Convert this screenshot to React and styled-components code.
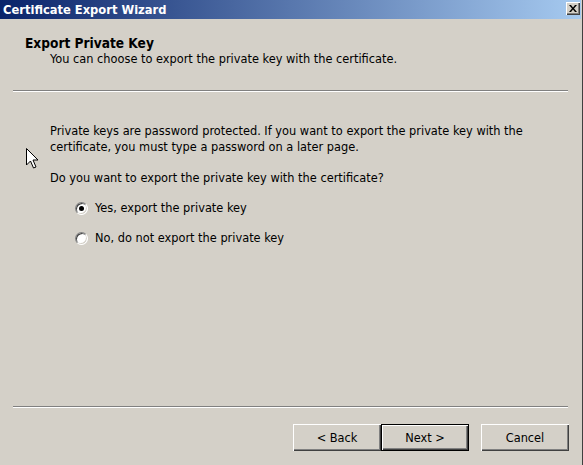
import React from "react";
import styled, { createGlobalStyle } from "styled-components";

const Global = createGlobalStyle`
  html, body { margin: 0; padding: 0; background: #d4d0c8; }
  body { font-family: "DejaVu Sans Condensed", "Liberation Sans", sans-serif; }
  * { box-sizing: border-box; }
`;

const FONT = `"DejaVu Sans Condensed", "Liberation Sans", sans-serif`;

const Window = styled.div`
  position: relative;
  width: 583px;
  height: 465px;
  display: flex;
  flex-direction: column;
  background: #d4d0c8;
  border-right: 1px solid #404040;
  padding-right: 1px;
  font-family: ${FONT};
  font-size: 12.65px;
  color: #000;
  overflow: hidden;
`;

const TitleBar = styled.div`
  height: 19px;
  flex: 0 0 19px;
  display: flex;
  align-items: center;
  justify-content: space-between;
  padding: 0 1px 0 3px;
  background: linear-gradient(to right, #0a246a, #a6caf0);
`;

const TitleText = styled.span`
  color: #fff;
  font-weight: bold;
  font-size: 12.8px;
  line-height: 19px;
  white-space: nowrap;
`;

const CloseButton = styled.div`
  width: 14px;
  height: 13px;
  margin-top: -2px;
  background: #d4d0c8;
  box-shadow: inset 1px 1px #fff, inset -1px -1px #404040, inset -2px -2px #808080;
  display: flex;
  align-items: center;
  justify-content: center;
`;

const Header = styled.div`
  padding: 16px 0 0 25px;
  line-height: 16px;
`;

const HeaderTitle = styled.div`
  font-weight: bold;
  font-size: 13.6px;
  line-height: 16px;
`;

const HeaderSub = styled.div`
  padding-left: 25px;
  line-height: 16px;
`;

const Separator = styled.div`
  height: 2px;
  margin: ${(p) => p.$top}px 13px 0 13px;
  border-top: 1px solid #808080;
  border-bottom: 1px solid #fff;
`;

const Body = styled.div`
  padding: 31px 0 0 50px;
  display: flex;
  flex-direction: column;
`;

const Para = styled.p`
  margin: ${(p) => p.$top || 0}px 0 0 0;
  line-height: 16px;
  white-space: nowrap;
`;

const RadioGroup = styled.div`
  margin: 14px 0 0 25px;
  display: flex;
  flex-direction: column;
  gap: 14px;
`;

const RadioRow = styled.label`
  height: 16px;
  display: flex;
  align-items: center;
  gap: 7px;
  line-height: 16px;
`;

const RadioCircle = styled.span`
  position: relative;
  flex: 0 0 13px;
  width: 13px;
  height: 13px;
  border-radius: 50%;
  background: #fff;
  border: 1px solid;
  border-color: #808080 #fff #fff #808080;
  box-shadow: inset 1px 1px 0 #404040, inset -1px -1px 0 #d4d0c8;
  &::after {
    content: "";
    display: ${(p) => (p.$checked ? "block" : "none")};
    position: absolute;
    left: 3px;
    top: 3px;
    width: 5px;
    height: 5px;
    border-radius: 50%;
    background: #000;
  }
`;

const Footer = styled.div`
  margin-top: auto;
  display: flex;
  flex-direction: column;
  padding-bottom: 14px;
`;

const ButtonRow = styled.div`
  margin-top: 16px;
  display: flex;
  justify-content: flex-end;
  padding-right: 12px;
`;

const Button = styled.button`
  width: 88px;
  height: 27px;
  margin-left: ${(p) => p.$gap || 0}px;
  font-family: ${FONT};
  font-size: 12.65px;
  color: #000;
  background: #d4d0c8;
  border: ${(p) => (p.$default ? "1px solid #000" : "none")};
  box-shadow: inset 1px 1px #fff, inset -1px -1px #404040, inset -2px -2px #808080;
  padding: 0;
  cursor: default;
`;

const Cursor = styled.svg`
  position: absolute;
  left: 26px;
  top: 148px;
`;

export default function App() {
  return (
    <>
      <Global />
      <Window>
        <TitleBar>
          <TitleText>Certificate Export Wizard</TitleText>
          <CloseButton>
            <svg width="8" height="7" viewBox="0 0 8 7">
              <path d="M0 0h2l2 2.5L6 0h2L5 3.5 8 7H6L4 4.5 2 7H0l3-3.5z" fill="#000" />
            </svg>
          </CloseButton>
        </TitleBar>
        <Header>
          <HeaderTitle>Export Private Key</HeaderTitle>
          <HeaderSub>You can choose to export the private key with the certificate.</HeaderSub>
        </Header>
        <Separator $top={23} />
        <Body>
          <Para>
            Private keys are password protected. If you want to export the private key with the
            <br />
            certificate, you must type a password on a later page.
          </Para>
          <Para $top={15}>Do you want to export the private key with the certificate?</Para>
          <RadioGroup>
            <RadioRow>
              <RadioCircle $checked />
              Yes, export the private key
            </RadioRow>
            <RadioRow>
              <RadioCircle />
              No, do not export the private key
            </RadioRow>
          </RadioGroup>
        </Body>
        <Footer>
          <Separator $top={0} />
          <ButtonRow>
            <Button>&lt; Back</Button>
            <Button $default>Next &gt;</Button>
            <Button $gap={12}>Cancel</Button>
          </ButtonRow>
        </Footer>
        <Cursor width="13" height="21" viewBox="0 0 13 21">
          <path d="M0.5 0.5 L0.5 17 L4.5 13 L7.5 20 L10 19 L7 12 L12 12 Z" fill="#fff" stroke="#000" strokeWidth="1" />
        </Cursor>
      </Window>
    </>
  );
}
